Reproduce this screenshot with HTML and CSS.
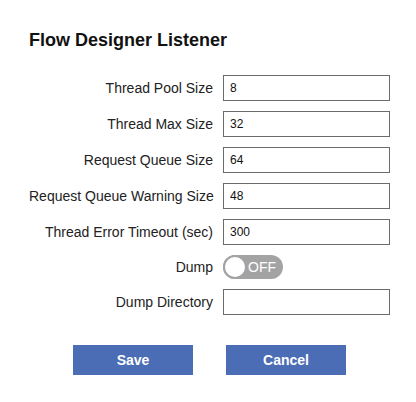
FILE: index.html
```html
<!DOCTYPE html>
<html lang="en">

<head>
    <meta charset="UTF-8">
    <meta name="viewport" content="width=device-width, initial-scale=1.0">
    <title>Flow Designer Listener</title>
    <link rel="stylesheet" href="styles.css">
</head>

<body>
    <div id="main">
        <h3 class="title">Flow Designer Listener</h3>
        <div class="form">
            <label class="label">Thread Pool Size</label>
            <input class="field" type="text" value="8">

            <label class="label">Thread Max Size</label>
            <input class="field" type="text" value="32">

            <label class="label">Request Queue Size</label>
            <input class="field" type="text" value="64">

            <label class="label">Request Queue Warning Size</label>
            <input class="field" type="text" value="48">

            <label class="label">Thread Error Timeout (sec)</label>
            <input class="field" type="text" value="300">

            <label class="label">Dump</label>
            <div class="toggle">
                <span class="knob"></span>
                <span class="toggleText">OFF</span>
            </div>

            <label class="label">Dump Directory</label>
            <input class="field" type="text" value="">
        </div>
        <div class="buttons">
            <button class="btn">Save</button>
            <button class="btn">Cancel</button>
        </div>
    </div>
</body>

</html>
```

FILE: styles.css
```css
body {
    margin: 0;
    background: #fff;
    font-family: "Liberation Sans", Arial, sans-serif;
    color: #222;
}

#main {
    padding: 29px 0 0 29px;
}

.title {
    margin: 0;
    font-size: 18px;
    line-height: 22px;
    font-weight: bold;
    color: #111;
}

.form {
    margin-top: 24px;
    display: grid;
    grid-template-columns: 184px 167px;
    column-gap: 10px;
    row-gap: 10px;
}

.label {
    font-size: 14px;
    text-align: right;
    align-self: center;
    white-space: nowrap;
}

.field {
    box-sizing: border-box;
    width: 167px;
    height: 26px;
    margin: 0;
    border: 1px solid #6b6b6b;
    padding: 0 6px;
    font-family: "Liberation Sans", Arial, sans-serif;
    font-size: 12px;
    color: #111;
    background: #fff;
}

.toggle {
    box-sizing: border-box;
    width: 60px;
    height: 24px;
    border-radius: 12px;
    background: #a3a3a3;
    display: flex;
    align-items: center;
}

.knob {
    box-sizing: border-box;
    width: 24px;
    height: 24px;
    border-radius: 50%;
    background: #fff;
    border: 2px solid #a3a3a3;
}

.toggleText {
    color: #fff;
    font-size: 14px;
    margin-left: 1px;
}

.buttons {
    display: flex;
    gap: 33px;
    margin: 30px 0 0 44px;
}

.btn {
    width: 120px;
    height: 30px;
    border: none;
    background: #4a6db5;
    color: #fff;
    font-family: "Liberation Sans", Arial, sans-serif;
    font-size: 14px;
    font-weight: bold;
}
```
